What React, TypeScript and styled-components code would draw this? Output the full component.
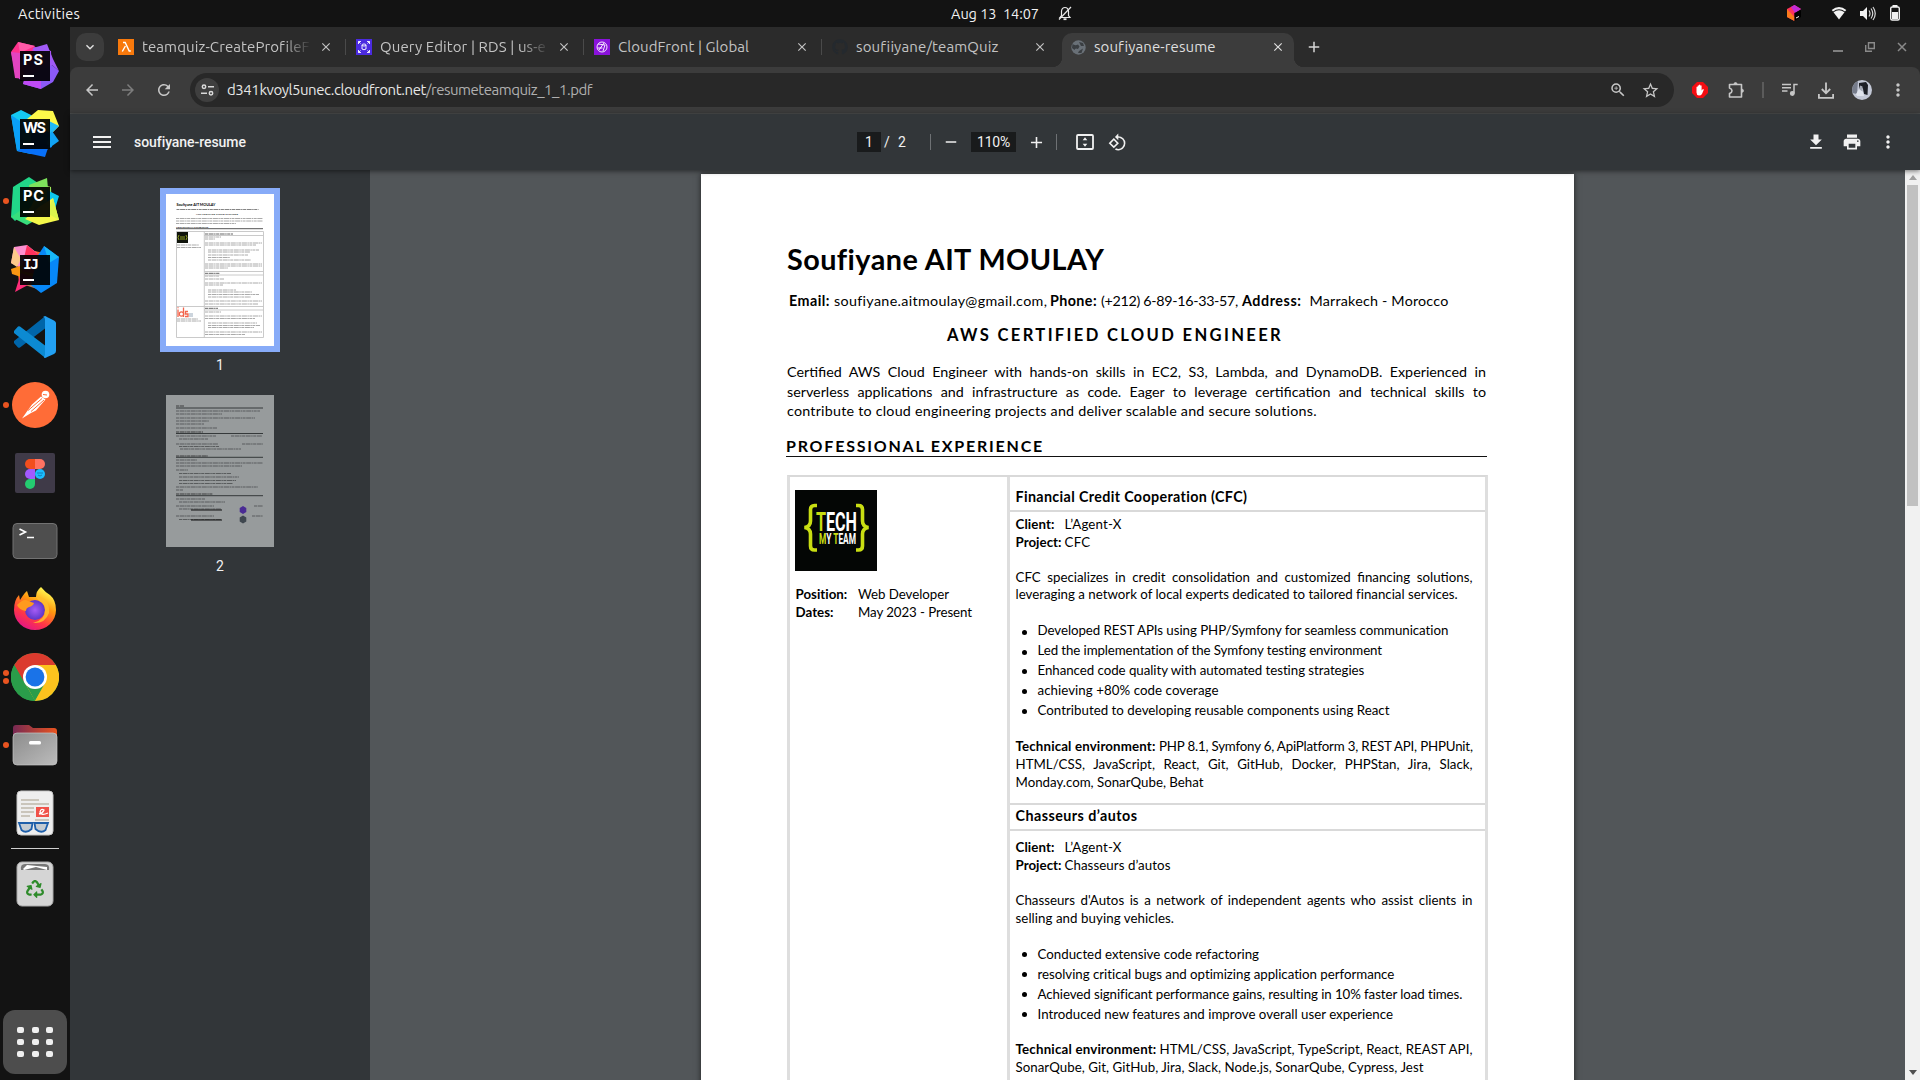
import React, { useLayoutEffect, useRef, useState } from 'react';
import styled, { createGlobalStyle } from 'styled-components';
import {
  MdAdd, MdArrowBack, MdArrowForward, MdClose, MdDownload, MdExpandMore, MdMenu, MdMoreVert,
  MdPrint, MdRefresh, MdRemove, MdRotate90DegreesCcw, MdStarBorder, MdZoomIn,
} from 'react-icons/md';
import { FaRecycle, FaGithub } from 'react-icons/fa';

const uiFont = 'Ubuntu, "Noto Sans", sans-serif';
const docFont = '"Proxima Nova", Lato, sans-serif';

const GlobalStyle = createGlobalStyle`
  * { box-sizing: border-box; }
  html, body { margin: 0; height: 100%; overflow: hidden; background: #131313; }
  svg { display: block; flex: none; }
`;

/* Text set to an exact measure, either by tracking or by the gaps between words. */
const FitSpan = styled.span<{ $tracking?: number }>`
  display: inline-block;
  justify-self: start;
  white-space: pre;
  letter-spacing: ${(p) => p.$tracking ?? 0}px;
`;

function Fit({ w, words, tracking, children }: { w: number; words?: boolean; tracking?: number; children: React.ReactNode }) {
  const ref = useRef<HTMLSpanElement>(null);
  const [style, setStyle] = useState<React.CSSProperties>({});
  useLayoutEffect(() => {
    const el = ref.current!;
    const text = el.textContent || '';
    const count = words ? text.split(' ').length - 1 : text.length;
    const gap = (w - el.getBoundingClientRect().width) / Math.max(count, 1);
    setStyle(words ? { wordSpacing: gap } : { letterSpacing: gap });
  }, [w, words]);
  return <FitSpan ref={ref} $tracking={words ? tracking : 0} style={style}>{children}</FitSpan>;
}

/* ---------- desktop ---------- */

const Desktop = styled.div`
  width: 1920px; height: 1080px; overflow: hidden;
  display: flex; flex-direction: column;
  background: #131313; color: #f2f2f2;
  font: 14.5px ${uiFont};
`;
const TopBar = styled.header`
  height: 27px; flex: none; padding: 0 19px 1px 18px;
  display: grid; grid-template-columns: 1fr auto 1fr; align-items: center;
`;
const Clock = styled.div`display: flex; align-items: center; gap: 19px; padding-left: 104px;`;
const Tray = styled.div`display: flex; align-items: center; justify-content: flex-end;`;
const TrayItem = styled.span<{ $gap: number }>`margin-left: ${(p) => p.$gap}px;`;
const Workspace = styled.div`flex: 1; min-height: 0; display: flex;`;

const Dock = styled.nav`
  width: 70px; flex: none; display: flex; flex-direction: column; padding-top: 4px;
`;
const DockItem = styled.div<{ $mt?: number }>`
  height: 68px; flex: none; display: flex; align-items: center; margin-top: ${(p) => p.$mt ?? 0}px;
`;
const Running = styled.div`width: 11px; padding-left: 3px; display: flex; flex-direction: column; gap: 2px;`;
const RunDot = styled.i`width: 6px; height: 6px; border-radius: 50%; background: #e95420;`;
const DockRule = styled.div`height: 1px; margin: 1px 11px 0; background: #d0d0d0; flex: none;`;
const AppsButton = styled.div`
  margin: auto 3px 6px; height: 64px; border-radius: 12px; background: #4d4d4d;
  display: grid; grid-template-columns: repeat(3, 7px); gap: 6px 7.500px; place-content: center;
`;
const AppDot = styled.i`height: 6px; border-radius: 2px; background: #f0f0f0;`;

/* ---------- browser ---------- */

const Browser = styled.main`
  flex: 1; min-width: 0; display: flex; flex-direction: column; background: #2b2b2b;
`;
const TabStrip = styled.div`height: 40px; flex: none; display: flex; align-items: center; padding-left: 6px;`;
const TabSearch = styled.button`
  width: 28px; height: 28px; border: 0; padding: 0; border-radius: 10px; background: #3c3c3c; color: #e3e3e3;
  display: grid; place-items: center; margin-right: 4px;
`;
const Tab = styled.div<{ $active?: boolean; $rule?: boolean }>`
  width: 238px; height: 34px; align-self: flex-end; display: flex; align-items: center;
  padding: 0 9px 6px 10px; color: ${(p) => (p.$active ? '#dfdfdf' : '#c3c3c3')};
  position: relative; font-size: 15px;
  ${(p) => p.$rule && `&::after { content: ''; position: absolute; right: 0; top: 6px; width: 1px; height: 16px; background: #4a4a4a; }`}
  ${(p) => p.$active && `
    width: 232px; margin-left: 2px; padding-right: 7px; padding-left: 9px; background: #3c3c3c; border-radius: 10px 10px 0 0;
    &::before { content: ''; position: absolute; left: -10px; right: -10px; bottom: 0; height: 10px;
      background: radial-gradient(circle at 0 0, transparent 10px, #3c3c3c 10.5px) left / 10px 10px no-repeat,
                  radial-gradient(circle at 100% 0, transparent 10px, #3c3c3c 10.5px) right / 10px 10px no-repeat; }
  `}
`;
const TabTitle = styled.span<{ $fade?: boolean }>`
  width: 168px; margin: 0 9px 0 8px; padding-bottom: 2px; overflow: hidden; white-space: nowrap;
  ${(p) => p.$fade && 'mask-image: linear-gradient(90deg, #000 84%, transparent 101%);'}
`;
const WindowButtons = styled.div`margin-left: auto; padding: 0 13px 1px 0; display: flex; gap: 22px;`;
const NewTab = styled.span`margin-left: 11px; color: #d6d6d6;`;

const NavBar = styled.div`
  height: 47px; flex: none; display: flex; align-items: center; background: #3c3c3c;
  border-bottom: 1px solid #4b4d4d; border-radius: 8px 8px 0 0; padding: 0 4px; color: #c7c7c7;
`;
const NavIcon = styled.span<{ $dim?: boolean }>`
  width: 36px; display: grid; place-items: center; flex: none; color: ${(p) => (p.$dim ? '#7d7d7d' : 'inherit')};
`;
const Omnibox = styled.div`
  flex: 1; height: 34px; margin: 0 8px; border-radius: 17px; background: #282828;
  display: flex; align-items: center; padding: 0 8px 0 5px; font-size: 15px; color: #b0b0b0;
`;
const Url = styled.span`padding-bottom: 1px; display: flex;`;
const SiteInfo = styled.span`
  width: 24px; height: 24px; border-radius: 50%; background: #3f3f3f; display: grid; place-items: center; margin-right: 8px;
`;
const Host = styled.span`color: #e6e6e6;`;
const OmniActions = styled.span`margin-left: auto; display: flex; gap: 14px; padding-right: 6px; color: #c7c7c7;`;
const NavRule = styled.i`width: 2px; height: 16px; background: #5b5b5b; margin: 0 8px;`;

/* ---------- pdf viewer ---------- */

const PdfBar = styled.div`
  height: 56px; flex: none; background: #323639; color: #f1f1f1; position: relative; z-index: 1;
  box-shadow: 0 1px 5px rgba(0, 0, 0, .55);
  display: grid; grid-template-columns: 1fr auto 1fr; align-items: center;
  font: 14px Roboto, sans-serif;
`;
const PdfTitle = styled.div`display: flex; align-items: center; gap: 20px; padding-left: 20px; font-weight: 500; font-size: 14px;`;
const PdfControls = styled.div`display: flex; align-items: center; padding-right: 6px;`;
const PdfField = styled.span<{ $w: number }>`
  width: ${(p) => p.$w}px; height: 20px; background: #191b1c; display: flex; align-items: center; justify-content: center;
`;
const PdfCell = styled.span<{ $w: number; $ml?: number }>`
  width: ${(p) => p.$w}px; margin-left: ${(p) => p.$ml ?? 0}px; display: grid; place-items: center;
`;
const PdfRule = styled.i<{ $ml?: number }>`width: 1px; height: 16px; background: #6e7174; margin-left: ${(p) => p.$ml ?? 0}px;`;
const PdfActions = styled.div`display: flex; justify-content: flex-end; gap: 16px; padding-right: 22px;`;

const Viewer = styled.div`flex: 1; min-height: 0; display: flex; background: #525659;`;
const Thumbs = styled.aside`
  width: 300px; flex: none; background: #323639; display: flex; flex-direction: column; align-items: center;
  padding-top: 18px; font: 14px Roboto, sans-serif; color: #f1f1f1;
`;
const ThumbFrame = styled.div<{ $on?: boolean }>`
  border: 6px solid ${(p) => (p.$on ? '#87abf8' : 'transparent')};
`;
const ThumbLabel = styled.div`height: 37px; line-height: 26px;`;
const Canvas = styled.section`flex: 1; min-width: 0; display: flex; justify-content: center; align-items: flex-start; overflow: hidden; padding-top: 4px;`;
const Scrollbar = styled.div`
  width: 15px; background: #f1f1f1; display: flex; flex-direction: column; align-items: center; flex: none;
`;
const ScrollArrow = styled.div`height: 15px; display: grid; place-items: center;`;
const ScrollThumb = styled.div`width: 11px; height: 321px; background: #c1c1c1; margin-bottom: auto;`;

/* ---------- resume ---------- */

const Paper = styled.article`
  width: 873px; height: 1235px; flex: none; background: #fff; color: #000; padding: 68px 87px 0 86px;
  box-shadow: 0 0 6px rgba(0, 0, 0, .6); font: 13.3px ${docFont};
`;
const Row = styled.div<{ $h: number; $mt?: number; $size?: number; $bold?: boolean; $in?: number }>`
  height: ${(p) => p.$h}px; line-height: ${(p) => p.$h}px; margin-top: ${(p) => p.$mt ?? 0}px;
  padding-left: ${(p) => p.$in ?? 0}px; font-size: ${(p) => p.$size ?? 13.3}px;
  font-weight: ${(p) => (p.$bold ? 700 : 400)}; white-space: nowrap; display: flex;
`;
const Label = styled.b<{ $w: number }>`width: ${(p) => p.$w}px; flex: none;`;
const SectionHead = styled.div`
  margin: 14.5px 0 0 -1px; height: 22px; line-height: 21px; border-bottom: 1px solid #111;
  font-size: 16px; font-weight: 700; white-space: nowrap;
`;
const Table = styled.div`
  margin: 18px 0 0; width: 701px; height: 800px; border: 3px solid #dedede; border-top: 2px solid #d9d9d9;
  display: grid; grid-template-columns: 220px 1fr;
`;
const Side = styled.div`border-right: 3px solid #dedede; padding: 13px 0 0 5px;`;
const Jobs = styled.div``;
const Cell = styled.div<{ $h: number; $pt: number }>`
  height: ${(p) => p.$h}px; padding: ${(p) => p.$pt}px 0 0 5.5px; border-bottom: 2px solid #d9d9d9;
`;
const Bullets = styled.div<{ $mt: number }>`margin-top: ${(p) => p.$mt}px;`;
const BulletRow = styled(Row)`align-items: center;`;
const Dot = styled.i`width: 5px; height: 5px; border-radius: 50%; background: #000; margin: 2px 11px 0 6px;`;
const Logo = styled.div`
  width: 82px; height: 81px; background: #040605; display: flex; align-items: center; justify-content: center;
`;

/* ---------- icons ---------- */

type Facet = [string, string];
const jet: Record<string, { stops: [string, string, string]; facets: Facet[]; w: number; font: string }> = {
  PS: {
    w: 20, font: 'Inter, sans-serif',
    stops: ['#ff318c', '#b74af7', '#765af8'],
    facets: [['0,11 7,1 24,5 15,17 3,25', '#ff318c'], ['7,1 24,5 9,12', '#ff5aa8'], ['0,11 9,12 14,38 4,37', '#e344c0'], ['22,7 36,3 42,18 48,30 41,24 30,40', '#a05af6'], ['41,24 48,30 42,41 30,48 12,43 14,36', '#8c5af8'], ['14,36 30,40 30,48 12,43', '#c04af5']],
  },
  WS: {
    w: 23, font: 'Inter, sans-serif',
    stops: ['#07c3f2', '#0a84ff', '#087cfa'],
    facets: [['0,6 10,1 20,6 20,45 6,42', '#14c9f2'], ['0,6 9,12 14,40 6,42', '#0aa0f8'], ['16,10 27,1 42,2 48,17 41,24 30,20', '#fcf84a'], ['38,12 48,17 41,24 38,26', '#22b9f5'], ['38,26 41,22 48,32 34,42', '#12a4f5'], ['6,42 20,34 38,36 34,48', '#0870f8']],
  },
  PC: {
    w: 21, font: 'Inter, sans-serif',
    stops: ['#21d789', '#b0ee4c', '#07c3f2'],
    facets: [['2,10 18,0 30,8 20,30 4,44 0,40', '#21d789'], ['18,8 36,1 38,22 20,20', '#7ee35c'], ['0,40 14,30 30,40 16,48', '#38dd7c'], ['36,13 48,19 44,32 36,26', '#0cc8ee'], ['28,30 42,21 48,43 28,48 14,42', '#f5f84a'], ['42,21 36,36 48,43', '#dcf54c']],
  },
  IJ: {
    w: 16, font: '"DejaVu Sans Mono", monospace',
    stops: ['#fe315d', '#f97a12', '#087cfa'],
    facets: [['3,2 16,0 26,8 12,24 0,18', '#fc8fd0'], ['3,2 10,14 6,22 0,18', '#fdc98a'], ['16,0 28,10 30,30 10,26', '#fe315d'], ['0,24 12,20 10,32 1,29', '#f99712'], ['10,28 28,34 4,47', '#fe2c78'], ['26,12 33,1 48,12 46,38 30,48 20,40', '#0788f8'], ['33,1 48,12 38,18', '#18b8f8']],
  },
};
const JetIcon = ({ id }: { id: string }) => (
  <svg width="48" height="48" viewBox="0 0 48 48">
    <defs>
      <linearGradient id={`j${id}`} x1="0" y1="0" x2="1" y2="1">
        {jet[id].stops.map((c, i) => <stop key={c} offset={i / 2} stopColor={c} />)}
      </linearGradient>
    </defs>
    <polygon points="5,8 24,6 40,10 41,38 26,44 8,38" fill={`url(#j${id})`} />
    {jet[id].facets.map(([pts, c]) => <polygon key={pts} points={pts} fill={c} />)}
    <rect x="9" y="10" width="30" height="30" fill="#000" opacity=".92" />
    <text x="12" y="23.500" fill="#fff" fontFamily={jet[id].font} fontWeight="700" fontSize="14.500" textLength={jet[id].w}>{id}</text>
    <rect x="12" y="34" width="11" height="2" fill="#fff" />
  </svg>
);
const CodeIcon = () => (
  <svg width="48" height="48" viewBox="0 0 48 48">
    <path d="M3 30 7 34.500Q8 35 9 34.500L36 14V4Q34 3 32.500 4.500L3 28Z" fill="#0065a9" />
    <path d="M3 18 7 13.500Q8 13 9 13.500L36 34V44Q34 45 32.500 43.500L3 20Z" fill="#0c8ad2" />
    <path d="M34 3 43 7.500Q45 8.500 45 10V38Q45 40 43 41L34 45Q32 45 34 42V6Q34 4 32 4Z" fill="#22a0f2" />
  </svg>
);
const PostmanIcon = () => (
  <svg width="48" height="48" viewBox="0 0 48 48">
    <circle cx="24" cy="24" r="23" fill="#ff6c37" />
    <circle cx="34.500" cy="13.500" r="3.800" fill="#fff" />
    <path d="M30 15.500 34.500 18.500 25 29.500 20 32 11 37.500 17 29 21 23.500Z" fill="#fff" />
    <path d="M17 29.500 31 17.500M20 30.500 33 19M32 13.500 36 14" stroke="#ff6c37" strokeWidth="1" />
  </svg>
);
const FigmaIcon = () => (
  <svg width="48" height="48" viewBox="0 0 48 48">
    <rect x="4" y="4" width="40" height="40" rx="2" fill="#3f3a48" />
    <path d="M24 10h-5a5 5 0 0 0 0 10h5z" fill="#f24e1e" /><path d="M24 10h5a5 5 0 0 1 0 10h-5z" fill="#ff7262" />
    <path d="M24 20h-5a5 5 0 0 0 0 10h5z" fill="#a259ff" /><circle cx="29" cy="25" r="5" fill="#1abcfe" />
    <path d="M24 30h-5a5 5 0 1 0 5 5z" fill="#24cb71" />
    <path d="M26 24h6M27 26q2 2 4 0" stroke="#147db5" fill="none" />
  </svg>
);
const TerminalIcon = () => (
  <svg width="48" height="48" viewBox="0 0 48 48">
    <rect x="2" y="6.500" width="44" height="35" rx="4" fill="#4e4e4e" stroke="#727272" />
    <path d="m8.500 12 6 3-6 3M16 20.500h7" stroke="#fff" strokeWidth="1.600" fill="none" />
  </svg>
);
const FirefoxIcon = () => (
  <svg width="48" height="48" viewBox="0 0 48 48">
    <defs>
      <linearGradient id="fx" x1=".8" y1=".1" x2=".3" y2="1"><stop offset="0" stopColor="#fff44f" /><stop offset=".35" stopColor="#ff980e" /><stop offset=".7" stopColor="#ff3647" /><stop offset="1" stopColor="#e31587" /></linearGradient>
      <radialGradient id="fp"><stop offset="0" stopColor="#a65cf5" /><stop offset="1" stopColor="#5b36c9" /></radialGradient>
    </defs>
    <path d="M30 2Q34 7 39 10 45 15 45 25A21 20 0 0 1 3 25Q3 15 8 10L9 15Q14 7 16 6L18 12 25 12Q25 6 30 2Z" fill="url(#fx)" />
    <circle cx="24" cy="25" r="10" fill="url(#fp)" />
    <path d="M6 20Q13 13 17 16L23 18Q22 21 18 22 15 23 15 26 8 25 6 20Z" fill="#ff9a1f" />
    <path d="M25 12Q39 12 38 28 34 39 22 38 34 35 34 25 34 18 28 16Z" fill="#ffbd2e" opacity=".85" />
  </svg>
);
const ChromeIcon = () => (
  <svg width="48" height="48" viewBox="0 0 48 48">
    <circle cx="24" cy="24" r="24" fill="#2a9d4a" />
    <path d="M3.200 12A24 24 0 0 1 44.800 12H24L13.600 30Z" fill="#db3b2e" />
    <path d="M44.800 12A24 24 0 0 1 24 48L34.400 30 34 12Z" fill="#fcc31e" />
    <path d="M24 12H44.800L36 24 34.400 30 24 48 13.600 30Z" fill="#fcc31e" />
    <path d="M3.200 12 13.600 30 24 48A24 24 0 0 1 3.200 12Z" fill="#2a9d4a" />
    <path d="M24 48 34 30 14 30Z" fill="#2a9d4a" /><path d="M24 48 34.400 30 35 26 40 38Z" fill="#fcc31e" />
    <circle cx="24" cy="24" r="12" fill="#fff" /><circle cx="24" cy="24" r="9.400" fill="#1a73e8" />
  </svg>
);
const FilesIcon = () => (
  <svg width="48" height="48" viewBox="0 0 48 48">
    <defs>
      <linearGradient id="ff"><stop stopColor="#772953" /><stop offset="1" stopColor="#e95420" /></linearGradient>
      <linearGradient id="fg" x2="1" y2="1"><stop stopColor="#8c8c8c" /><stop offset="1" stopColor="#bcbcbc" /></linearGradient>
    </defs>
    <path d="M2 7Q2 4 5 4H18L22 7H43Q46 7 46 10V30H2Z" fill="url(#ff)" />
    <rect x="2" y="12" width="44" height="32" rx="4" fill="url(#fg)" stroke="#c5c5c5" strokeWidth=".7" />
    <rect x="18" y="20" width="12" height="3.500" rx="1.500" fill="#fff" />
  </svg>
);
const EvinceIcon = () => (
  <svg width="48" height="48" viewBox="0 0 48 48">
    <rect x="6" y="2" width="36" height="44" rx="4" fill="#eee" stroke="#c7c7c7" />
    <path d="M10 11H28M10 15H38M10 19H23M10 23H23M10 27H19M24 31H38" stroke="#beb8aa" strokeWidth="1.600" />
    <rect x="25" y="18" width="13" height="10" fill="#f0524a" />
    <path d="M28 25Q32 24 33 21 30 19 29 23 30 27 37 24" stroke="#fff" fill="none" strokeWidth="1.300" />
    <path d="M8 34H21.500L20.500 40Q15 45 10.500 41ZM23.500 34H37L34.500 41Q30 45 24.500 40Z" fill="#c3cbd2" stroke="#1e5faa" strokeWidth="1.800" />
  </svg>
);
const BinIcon = () => (
  <svg width="48" height="48" viewBox="0 0 48 48">
    <rect x="6" y="2" width="36" height="44" rx="5" fill="#d5d5d5" stroke="#aaa" />
    <path d="M10 10Q9 4 14 4H34Q39 4 38 10Z" fill="#777" />
    <path d="M12 9 16 5 36 7 36 10 25 7 13 10Z" fill="#fff" />
    <g transform="translate(15 20)"><FaRecycle size={18} color="#2e8b2a" /></g>
  </svg>
);

const dock: { icon: React.ReactNode; run?: number }[] = [
  { icon: <JetIcon id="PS" /> }, { icon: <JetIcon id="WS" /> }, { icon: <JetIcon id="PC" />, run: 1 }, { icon: <JetIcon id="IJ" /> },
  { icon: <CodeIcon /> }, { icon: <PostmanIcon />, run: 1 }, { icon: <FigmaIcon /> }, { icon: <TerminalIcon /> },
  { icon: <FirefoxIcon /> }, { icon: <ChromeIcon />, run: 2 }, { icon: <FilesIcon />, run: 1 }, { icon: <EvinceIcon /> },
];

const BellOff = () => (
  <svg width="14" height="15" viewBox="0 0 14 15" fill="none" stroke="#e8e8e8" strokeWidth="1.200">
    <path d="M2 11.500H12L10.500 9.500V5Q10 1.500 7 1.500T3.500 5V9.500Z" /><path d="M1 13.500 13 1" /><path d="M5.500 13.200h3" strokeWidth="1.800" />
  </svg>
);
const ToolboxIcon = () => (
  <svg width="15" height="16" viewBox="0 0 15 16">
    <path d="M7.500 0 14 4 7.500 8V16L0 12V4Z" fill="#fe315d" /><path d="M7.500 0 14 4 8 8 4 2Z" fill="#c22bd8" />
    <path d="M0 4V12L7.500 16V12Z" fill="#fb7a1d" /><path d="M7.500 8 14 5V12L7.500 16Z" fill="#000" /><path d="m9 13 3-1.500" stroke="#fff" />
  </svg>
);
const WifiIcon = () => (
  <svg width="16" height="14" viewBox="0 0 16 14"><path d="M.7 4Q8-2 15.300 4L14 5.500Q8 1 2 5.500Z" fill="#f2f2f2" /><path d="M2.500 6.200Q8 2.500 13.500 6.200L8 13.500Z" fill="#f2f2f2" /></svg>
);
const SoundIcon = () => (
  <svg width="16" height="15" viewBox="0 0 16 15"><path d="M0 5H3L7 1V14L3 10H0Z" fill="#f2f2f2" /><path d="M9 4.500Q11 7.500 9 10.500M11 2.500Q14.500 7.500 11 12.500M13 1Q17.500 7.500 13 14" stroke="#d5d5d5" fill="none" strokeWidth="1.200" /></svg>
);
const BatteryIcon = () => (
  <svg width="12" height="16" viewBox="0 0 12 16"><path d="M3.500 0h5v2h-5z" fill="#f2f2f2" /><rect x="1.700" y="2" width="8.600" height="13" rx="1.500" fill="none" stroke="#f2f2f2" strokeWidth="1.400" /><path d="M3 7h6v7H3z" fill="#f2f2f2" /></svg>
);

const LambdaIcon = () => (
  <svg width="16" height="16" viewBox="0 0 16 16"><path d="M0 0h16v16H0z" fill="#f8790c" /><path d="M5 3.500h2.200l4 8.500h1.600M7.400 7 4.300 12.500" stroke="#fff" strokeWidth="1.400" fill="none" /></svg>
);
const RdsIcon = () => (
  <svg width="16" height="16" viewBox="0 0 16 16" fill="none" stroke="#fff" strokeWidth=".9"><path d="M0 0h16v16H0z" fill="#4b2be0" stroke="none" /><ellipse cx="8" cy="6" rx="2" ry="1" /><path d="M6 6v4q2 1.500 4 0V6M2.500 5V2.500H5M2.500 2.500l2 2M11 2.500h2.500V5M13.500 2.500l-2 2M2.500 11v2.500H5M2.500 13.500l2-2M11 13.500h2.500V11M13.500 13.500l-2-2" /></svg>
);
const CloudFrontIcon = () => (
  <svg width="16" height="16" viewBox="0 0 16 16" fill="none" stroke="#fff" strokeWidth=".9"><path d="M0 0h16v16H0z" fill="#8a12dc" stroke="none" /><circle cx="8" cy="8" r="5" /><path d="M4 5l7 1-2 6M5 11l5-7M3.500 9l5 0" /></svg>
);
const GlobeIcon = () => (
  <svg width="15" height="15" viewBox="0 0 15 15"><circle cx="7.500" cy="7.500" r="7.200" fill="#697077" /><path d="M1.500 4Q4 6 7 4.500L8.500 6.500 7 9Q4 7.500 3.500 10L1 8ZM8 2 12 3 13 6 10 6ZM8 11 12 8.500 10.500 13 7 13Z" fill="#3a3e42" /></svg>
);
const TuneIcon = () => (
  <svg width="13" height="12" viewBox="0 0 13 12" fill="none" stroke="#dadada" strokeWidth="1.500"><circle cx="3" cy="2.800" r="1.700" /><path d="M7 2.800h6M0 9.200h6" /><circle cx="10" cy="9.200" r="1.700" /></svg>
);
const BlockIcon = () => (
  <svg width="16" height="16" viewBox="0 0 16 16"><path d="M5 0h6l5 5v6l-5 5H5l-5-5V5z" fill="#f40d12" /><path d="M4.500 8V5q.8-.8 1.200 0V3.700q.8-.9 1.300 0V3q.8-.9 1.300 0v.7q.8-.8 1.300 0V8.500l1.300-1.500 1 .6L10 12q-1 1.500-3 1.500-2.500-.3-2.500-3z" fill="#fff" /></svg>
);
const PuzzleIcon = () => (
  <svg width="17" height="18" viewBox="0 0 17 18" fill="none" stroke="#c7c7c7" strokeWidth="1.600" strokeLinejoin="round">
    <path d="M1.500 3.500H13.500V16H1.500V12.500Q4 11.500 4 9.700T1.500 7Z" />
    <path d="M6 3a1.500 1.500 0 0 1 3 0zM14 8.200a1.500 1.500 0 0 1 0 3z" fill="#c7c7c7" strokeWidth=".8" />
  </svg>
);
const TrayDownIcon = () => (
  <svg width="16" height="17" viewBox="0 0 16 17" fill="none" stroke="#c7c7c7" strokeWidth="1.800"><path d="M8 .5V11M3.800 7 8 11.200 12.200 7M.9 12v3.900H15.100V12" /></svg>
);
const QueueIcon = () => (
  <svg width="16" height="14" viewBox="0 0 16 14" fill="none" stroke="#c7c7c7" strokeWidth="1.500"><path d="M0 1.500h9M0 4.800h9M0 8.100h5.500M12 10.500V1.500h3.700" /><circle cx="10.300" cy="10.500" r="1.700" fill="#c7c7c7" /></svg>
);
const Avatar = () => (
  <svg width="20" height="20" viewBox="0 0 20 20"><defs><clipPath id="av"><circle cx="10" cy="10" r="10" /></clipPath></defs><g clipPath="url(#av)"><path d="M0 0h20v20H0z" fill="#c3c8d6" /><path d="M0 3 6 1 5 14 0 13z" fill="#767c8b" /><path d="M7 3 14 2 16 5 15.500 15 12 14 11 9 9 6 7 9z" fill="#1d2027" /><path d="M8 5.500l2.500 1V11l-1.500 1-2-3z" fill="#a4a9b5" /><path d="M4 14l3-5 4 3 1 4H5z" fill="#dfe3ec" /></g></svg>
);
const FitPageIcon = () => (
  <svg width="18" height="16" viewBox="0 0 18 16"><rect x="1" y="1" width="16" height="14" rx="1" fill="none" stroke="#f1f1f1" strokeWidth="1.800" /><path d="m9 3.200 2.300 3H6.700zM9 12.800l2.300-3H6.700z" fill="#f1f1f1" /></svg>
);
const MinimizeIcon = () => <svg width="10" height="10" viewBox="0 0 10 10"><path d="M0 9h10" stroke="#8a8a8a" strokeWidth="1.800" /></svg>;
const RestoreIcon = () => <svg width="10" height="10" viewBox="0 0 10 10" fill="none" stroke="#8a8a8a" strokeWidth="1.400"><path d="M3.500.7h5.800v5.800H3.500zM.7 3v6.300H7" /></svg>;
const CloseIcon = () => <svg width="10" height="10" viewBox="0 0 10 10"><path d="m1 1 8 8M9 1 1 9" stroke="#8a8a8a" strokeWidth="1.500" /></svg>;

const TechLogo = () => (
  <svg width="82" height="81" viewBox="0 0 82 81">
    <path d="M22 15.500h-2.500q-4 0-4 4V31q0 5.500-6 6.500 6 1 6 6.500v12q0 4 4 4H22M61 15.500h2.500q4 0 4 4V31q0 5.500 6 6.500-6 1-6 6.500v12q0 4-4 4H61" fill="none" stroke="#c9de12" strokeWidth="3.600" />
    <g fontFamily="Roboto, sans-serif" fontWeight="700">
      <text x="21" y="41" fontSize="26" fill="#fff" textLength="41" lengthAdjust="spacingAndGlyphs"><tspan fill="#c9de12">T</tspan>ECH</text>
      <text x="24" y="54" fontSize="14.500" fill="#fff" textLength="37" lengthAdjust="spacingAndGlyphs"><tspan fill="#c9de12">M</tspan>Y <tspan fill="#c9de12">T</tspan>EAM</text>
    </g>
  </svg>
);

/* ---------- thumbnails ---------- */

type Bar = [number, number, number];
const pageOneBars: Bar[] = [
  [10, 24.500, 87], [10, 29.500, 60],
  [39, 43, 16], [39, 45, 10], [39, 49, 57], [39, 51, 51], [42, 56, 51], [42, 58, 42], [42, 61, 40], [42, 63.500, 22], [42, 66, 43], [39, 70, 57], [39, 72, 57], [39, 74, 23],
  [39, 82, 14], [39, 85, 19], [39, 89, 57], [39, 91, 18], [42, 96, 28], [42, 98, 44], [42, 100.500, 51], [42, 103, 43], [39, 107, 57], [39, 110, 53],
  [39, 118, 16], [39, 122, 57], [39, 124.500, 50], [42, 129, 49], [42, 131.500, 52], [42, 133.500, 46], [39, 138, 57], [39, 140.500, 40],
  [11, 51, 22], [11, 53.500, 24], [11, 125, 21], [11, 127, 24],
];
const pageTwoBars: Bar[] = [
  [10, 16, 84], [10, 19, 46], [10, 23, 79], [10, 26, 33], [10, 29, 28], [10, 33, 41], [10, 41, 40], [65, 41, 31], [13, 44, 29], [10, 49, 42], [76, 49, 21], [13, 51.500, 40], [14, 54, 61],
  [10, 65, 21], [10, 68, 87], [10, 71, 66], [10, 75, 12], [13, 78.500, 52], [13, 82, 60], [13, 85.500, 57], [13, 88.500, 54], [10, 92, 82], [10, 95, 7],
  [10, 104, 29], [13, 107, 46], [10, 111, 38], [88, 111, 9], [13, 114, 42], [10, 121, 38], [86, 121, 11], [13, 124.500, 42],
];
const TextBars = ({ bars, color, fade }: { bars: Bar[]; color: string; fade?: number }) => (
  <g stroke={color} strokeWidth="1" strokeDasharray="3 .6 5 .5 1.500 .5" opacity={fade ?? 0.45}>
    {bars.map(([x, y, w]) => <path key={`${x}-${y}`} d={`M${x} ${y}h${w}`} />)}
  </g>
);
const ThumbOne = () => (
  <svg width="108" height="152" viewBox="0 0 108 152" fontFamily={docFont}>
    <path d="M0 0h108v152H0z" fill="#fff" />
    <text x="10.500" y="12" fontSize="3.700" fontWeight="700" textLength="39">Soufiyane AIT MOULAY</text>
    <TextBars bars={[[10.500, 15.500, 82]]} color="#333" fade={0.6} />
    <text x="30" y="21.200" fontSize="2.200" fontWeight="700" textLength="42">AWS CERTIFIED CLOUD ENGINEER</text>
    <TextBars bars={pageOneBars} color="#444" />
    <TextBars bars={[[10, 27, 87]]} color="#444" />
    <text x="10.300" y="34" fontSize="2.100" fontWeight="700" textLength="32">PROFESSIONAL EXPERIENCE</text>
    <path d="M10 34.700h87" stroke="#555" />
    <path d="M10.500 37.500h87V143.500h-87zM38.300 37.500v106M38.300 41.500h59M38.300 77.500h59M38.300 81h59M10.500 112.500h87M38.300 116h59" stroke="#c4c4c4" fill="none" strokeWidth=".9" />
    <TextBars bars={[[39, 40, 28], [39, 79.300, 15], [39, 114.300, 13]]} color="#000" fade={0.6} />
    <path d="M11 38h11v11H11z" fill="#10140c" /><path d="M13 41l-1 2.500 1 2.500M20 41l1 2.500-1 2.500M14 43h5M14 45h5" stroke="#8f9f22" fill="none" />
    <path d="M12 115.500v7.500M12 113.300v1M17.500 113.500v9.500M22 117.500h-2.500v2.500h2.500v2.500h-3" stroke="#f2644c" fill="none" strokeWidth="1.300" /><circle cx="15.500" cy="120" r="2.200" fill="none" stroke="#f2644c" strokeWidth="1.200" /><path d="M23 120h4M23 122h4" stroke="#9ab" />
  </svg>
);
const ThumbTwo = () => (
  <svg width="108" height="152" viewBox="0 0 108 152">
    <path d="M0 0h108v152H0z" fill="#979b9c" />
    <TextBars bars={pageTwoBars} color="#1c1f20" fade={0.5} />
    <TextBars bars={[[10, 11, 8], [10, 37, 27], [10, 61, 32], [10, 99, 37]]} color="#000" fade={0.6} />
    <path d="M10 13h87M10 38.500h87M10 62.300h87M10 100.700h87" stroke="#35393a" /><path d="M25 115h31M25 125h31" stroke="#111" />
    <path d="m77 111 3.300 2v4l-3.300 2-3.300-2v-4z" fill="#4a2b94" /><path d="m77 120.500 3.300 2v4l-3.300 2-3.300-2v-4z" fill="#3f474f" />
  </svg>
);

/* ---------- content ---------- */

const tabs: { icon: React.ReactNode; title: string; w: number; rule?: boolean; active?: boolean }[] = [
  { icon: <LambdaIcon />, title: 'teamquiz-CreateProfileF', w: 167, rule: true },
  { icon: <RdsIcon />, title: 'Query Editor | RDS | us-e', w: 166, rule: true },
  { icon: <CloudFrontIcon />, title: 'CloudFront | Global', w: 131, rule: true },
  { icon: <FaGithub size={16} color="#24292e" />, title: 'soufiiyane/teamQuiz', w: 142 },
  { icon: <GlobeIcon />, title: 'soufiyane-resume', w: 121, active: true },
];
const T = 0;

const Bullet = ({ h, w, children }: { h: number; w: number; children: React.ReactNode }) => (
  <BulletRow $h={h}><Dot /><Fit w={w}>{children}</Fit></BulletRow>
);

const Resume = () => (
  <Paper>
    <Row $h={34} $size={28.8} $bold><Fit w={317}>Soufiyane AIT MOULAY</Fit></Row>
    <Row $h={20} $mt={15} $size={14.3} $in={2}>
      <Label $w={45}><Fit w={41}>Email:</Fit></Label>
      <Label as="span" $w={216}><Fit w={213}>soufiyane.aitmoulay@gmail.com,</Fit></Label>
      <Label $w={51}><Fit w={47}>Phone:</Fit></Label>
      <Label as="span" $w={141}><Fit w={137}>(+212) 6-89-16-33-57,</Fit></Label>
      <Label $w={67.5}><Fit w={59.5}>Address:</Fit></Label>
      <Fit w={139}>Marrakech - Morocco</Fit>
    </Row>
    <Row $h={20} $mt={14} $size={16.6} $bold $in={160}><Fit w={336}>AWS CERTIFIED CLOUD ENGINEER</Fit></Row>
    <Row $h={19.5} $mt={17} $size={14.3}><Fit w={699} words tracking={T}>Certified AWS Cloud Engineer with hands-on skills in EC2, S3, Lambda, and DynamoDB. Experienced in</Fit></Row>
    <Row $h={19.5} $size={14.3}><Fit w={699} words tracking={T}>serverless applications and infrastructure as code. Eager to leverage certification and technical skills to</Fit></Row>
    <Row $h={19.5} $size={14.3}><Fit w={530}>contribute to cloud engineering projects and deliver scalable and secure solutions.</Fit></Row>
    <SectionHead><Fit w={258}>PROFESSIONAL EXPERIENCE</Fit></SectionHead>
    <Table>
      <Side>
        <Logo><TechLogo /></Logo>
        <Row $h={18} $mt={14} $in={0.5}><Label $w={62.5}><Fit w={52}>Position:</Fit></Label><Fit w={91}>Web Developer</Fit></Row>
        <Row $h={18} $in={0.5}><Label $w={62.5}><Fit w={38}>Dates:</Fit></Label><Fit w={114}>May 2023 - Present</Fit></Row>
      </Side>
      <Jobs>
        <Cell $h={35} $pt={10}><Row $h={20} $size={14.3} $bold><Fit w={232}>Financial Credit Cooperation (CFC)</Fit></Row></Cell>
        <Cell $h={293} $pt={3}>
          <Row $h={18}><Label $w={49}><Fit w={39}>Client:</Fit></Label><Fit w={57}>L’Agent-X</Fit></Row>
          <Row $h={18}><Label $w={49}><Fit w={46}>Project:</Fit></Label><Fit w={26}>CFC</Fit></Row>
          <Row $h={17} $mt={18}><Fit w={457} words tracking={T}>CFC specializes in credit consolidation and customized financing solutions,</Fit></Row>
          <Row $h={17}><Fit w={442}>leveraging a network of local experts dedicated to tailored financial services.</Fit></Row>
          <Bullets $mt={18.4}>
            <Bullet h={19.8} w={411}>Developed REST APIs using PHP/Symfony for seamless communication</Bullet>
            <Bullet h={19.8} w={345}>Led the implementation of the Symfony testing environment</Bullet>
            <Bullet h={19.8} w={327}>Enhanced code quality with automated testing strategies</Bullet>
            <Bullet h={19.8} w={181}>achieving +80% code coverage</Bullet>
            <Bullet h={19.8} w={352}>Contributed to developing reusable components using React</Bullet>
          </Bullets>
          <Row $h={18} $mt={16.5}><Label $w={143.5}><Fit w={140}>Technical environment:</Fit></Label><Fit w={313.5}>PHP 8.1, Symfony 6, ApiPlatform 3, REST API, PHPUnit,</Fit></Row>
          <Row $h={18}><Fit w={457} words tracking={T}>HTML/CSS, JavaScript, React, Git, GitHub, Docker, PHPStan, Jira, Slack,</Fit></Row>
          <Row $h={18}><Fit w={188}>Monday.com, SonarQube, Behat</Fit></Row>
        </Cell>
        <Cell $h={26} $pt={1}><Row $h={20} $size={14.3} $bold><Fit w={122}>Chasseurs d’autos</Fit></Row></Cell>
        <Cell $h={420} $pt={8}>
          <Row $h={17.5}><Label $w={49}><Fit w={39}>Client:</Fit></Label><Fit w={57}>L’Agent-X</Fit></Row>
          <Row $h={17.5}><Label $w={49}><Fit w={46}>Project:</Fit></Label><Fit w={106}>Chasseurs d’autos</Fit></Row>
          <Row $h={17.5} $mt={18}><Fit w={457} words tracking={T}>Chasseurs d'Autos is a network of independent agents who assist clients in</Fit></Row>
          <Row $h={17.5}><Fit w={158.5}>selling and buying vehicles.</Fit></Row>
          <Bullets $mt={16.5}>
            <Bullet h={20} w={221.5}>Conducted extensive code refactoring</Bullet>
            <Bullet h={20} w={357.5}>resolving critical bugs and optimizing application performance</Bullet>
            <Bullet h={20} w={425}>Achieved significant performance gains, resulting in 10% faster load times.</Bullet>
            <Bullet h={20} w={355.5}>Introduced new features and improve overall user experience</Bullet>
          </Bullets>
          <Row $h={18} $mt={16.5}><Label $w={144}><Fit w={141}>Technical environment:</Fit></Label><Fit w={313}>HTML/CSS, JavaScript, TypeScript, React, REAST API,</Fit></Row>
          <Row $h={18}><Fit w={408}>SonarQube, Git, GitHub, Jira, Slack, Node.js, SonarQube, Cypress, Jest</Fit></Row>
        </Cell>
      </Jobs>
    </Table>
  </Paper>
);

export default function App() {
  return (
    <Desktop>
      <GlobalStyle />
      <TopBar>
        <Fit w={62}>Activities</Fit>
        <Clock><Fit w={88}>Aug 13  14:07</Fit><BellOff /></Clock>
        <Tray>
          <ToolboxIcon /><TrayItem $gap={29}><WifiIcon /></TrayItem><TrayItem $gap={13}><SoundIcon /></TrayItem><TrayItem $gap={13}><BatteryIcon /></TrayItem>
        </Tray>
      </TopBar>
      <Workspace>
        <Dock>
          {dock.map((d, i) => (
            <DockItem key={i}>
              <Running>{Array.from({ length: d.run ?? 0 }, (_, k) => <RunDot key={k} />)}</Running>
              {d.icon}
            </DockItem>
          ))}
          <DockRule />
          <DockItem $mt={1}><Running /><BinIcon /></DockItem>
          <AppsButton>{Array.from({ length: 9 }, (_, k) => <AppDot key={k} />)}</AppsButton>
        </Dock>
        <Browser>
          <TabStrip>
            <TabSearch><MdExpandMore size={16} /></TabSearch>
            {tabs.map((t) => (
              <Tab key={t.title} $active={t.active} $rule={t.rule}>
                {t.icon}
                <TabTitle $fade={t.w > 160}><Fit w={t.w}>{t.title}</Fit></TabTitle>
                <MdClose size={14} />
              </Tab>
            ))}
            <NewTab><MdAdd size={18} /></NewTab>
            <WindowButtons><MinimizeIcon /><RestoreIcon /><CloseIcon /></WindowButtons>
          </TabStrip>
          <NavBar>
            <NavIcon><MdArrowBack size={18} /></NavIcon>
            <NavIcon $dim><MdArrowForward size={18} /></NavIcon>
            <NavIcon><MdRefresh size={18} /></NavIcon>
            <Omnibox>
              <SiteInfo><TuneIcon /></SiteInfo>
              <Url>
                <Host><Fit w={199}>d341kvoyl5unec.cloudfront.net</Fit></Host>
                <Fit w={166}>/resumeteamquiz_1_1.pdf</Fit>
              </Url>
              <OmniActions><MdZoomIn size={18} /><MdStarBorder size={19} /></OmniActions>
            </Omnibox>
            <NavIcon><BlockIcon /></NavIcon>
            <NavIcon><PuzzleIcon /></NavIcon>
            <NavRule />
            <NavIcon><QueueIcon /></NavIcon>
            <NavIcon><TrayDownIcon /></NavIcon>
            <NavIcon><Avatar /></NavIcon>
            <NavIcon><MdMoreVert size={20} /></NavIcon>
          </NavBar>
          <PdfBar>
            <PdfTitle><MdMenu size={24} /><Fit w={111.5}>soufiyane-resume</Fit></PdfTitle>
            <PdfControls>
              <PdfField $w={24}>1</PdfField><PdfCell $w={12}>/</PdfCell><PdfCell $w={18}>2</PdfCell>
              <PdfRule $ml={19} />
              <PdfCell $w={40}><MdRemove size={18} /></PdfCell>
              <PdfField $w={45}><Fit w={33}>110%</Fit></PdfField>
              <PdfCell $w={40}><MdAdd size={19} /></PdfCell>
              <PdfRule />
              <PdfCell $w={38} $ml={9}><FitPageIcon /></PdfCell>
              <PdfCell $w={19} $ml={4}><MdRotate90DegreesCcw size={19} /></PdfCell>
            </PdfControls>
            <PdfActions><MdDownload size={20} /><MdPrint size={20} /><MdMoreVert size={20} /></PdfActions>
          </PdfBar>
          <Viewer>
            <Thumbs>
              <ThumbFrame $on><ThumbOne /></ThumbFrame><ThumbLabel>1</ThumbLabel>
              <ThumbFrame><ThumbTwo /></ThumbFrame><ThumbLabel>2</ThumbLabel>
            </Thumbs>
            <Canvas><Resume /></Canvas>
            <Scrollbar>
              <ScrollArrow><svg width="8" height="5"><path d="M4 0 8 5H0z" fill="#a0a0a0" /></svg></ScrollArrow>
              <ScrollThumb />
              <ScrollArrow><svg width="8" height="5"><path d="M4 5 8 0H0z" fill="#505050" /></svg></ScrollArrow>
            </Scrollbar>
          </Viewer>
        </Browser>
      </Workspace>
    </Desktop>
  );
}
